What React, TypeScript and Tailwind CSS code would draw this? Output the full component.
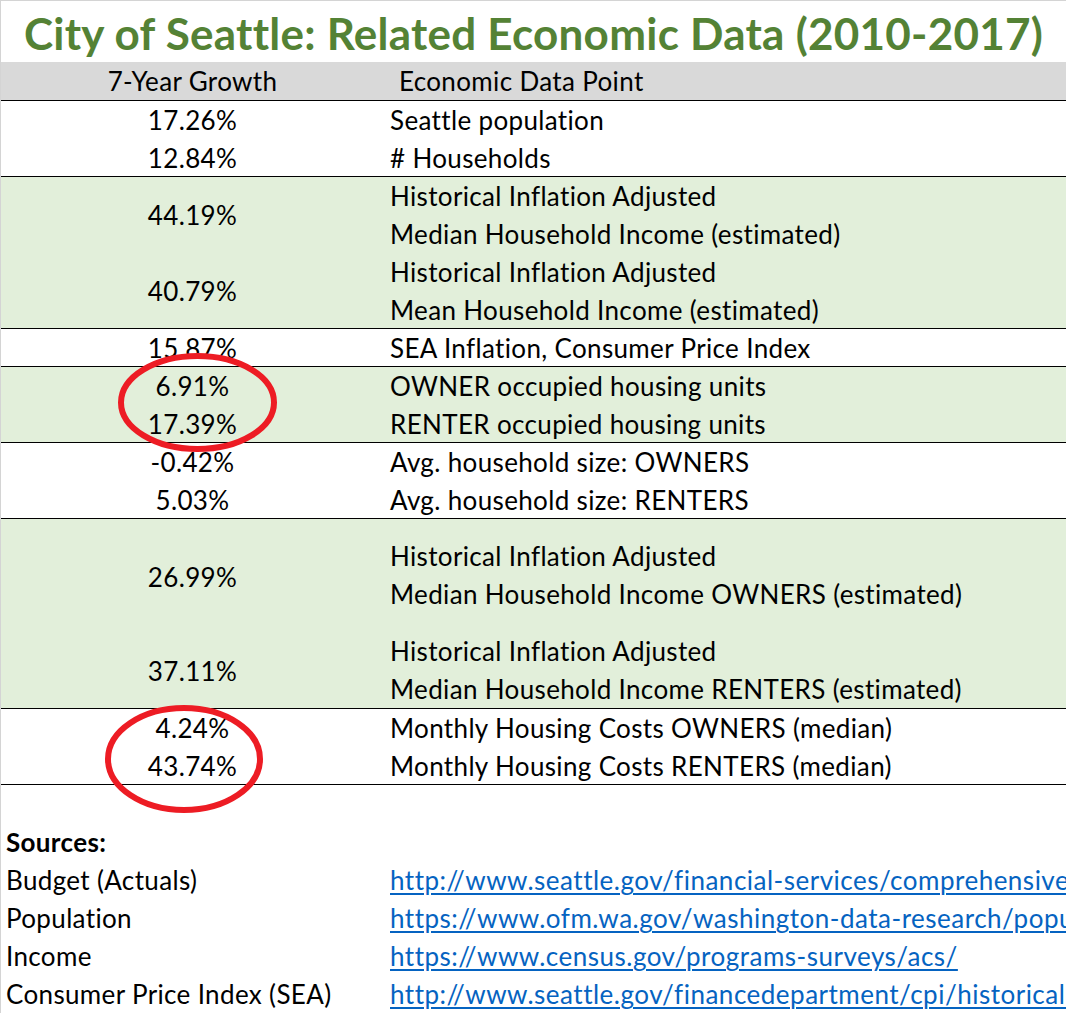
import React from "react";

const GREEN = "bg-[#e2efda]";

function Row({ children, className = "" }: { children?: React.ReactNode; className?: string }) {
  return <div className={"h-[38px] leading-[38px] whitespace-nowrap " + className}>{children}</div>;
}

function Spacer({ h }: { h: string }) {
  return <div className={h} />;
}

function Group({
  bg,
  h,
  left,
  right,
}: {
  bg: string;
  h: string;
  left: React.ReactNode;
  right: React.ReactNode;
}) {
  return (
    <div className={`flex border-b border-black ${bg} ${h}`}>
      <div className="flex w-[383px] shrink-0 flex-col text-center">{left}</div>
      <div className="flex flex-1 flex-col pl-[6px]">{right}</div>
    </div>
  );
}

function Ellipses() {
  return (
    <svg
      className="pointer-events-none absolute left-0 top-0"
      width="1074"
      height="1013"
      viewBox="0 0 1074 1013"
    >
      <ellipse cx="197.5" cy="402.5" rx="76.5" ry="46.5" fill="none" stroke="#ed1c24" strokeWidth="6" />
      <ellipse cx="184" cy="759" rx="76" ry="51" fill="none" stroke="#ed1c24" strokeWidth="6" />
    </svg>
  );
}

export default function App() {
  return (
    <div className="relative h-[1013px] w-[1074px] overflow-hidden bg-white font-['Lato',sans-serif] text-[26px] tracking-[0.35px] text-black">
      <div className="w-[1066px] overflow-hidden border-l border-t border-[#d4d4d4]">
        {/* Title */}
        <div className="h-[61px] pt-[10px] text-center text-[44px] font-bold leading-none tracking-[0.25px] text-[#548235] whitespace-nowrap">
          City of Seattle: Related Economic Data (2010-2017)
        </div>

        {/* Header */}
        <div className="flex h-[39px] border-b border-black bg-[#d9d9d9]">
          <div className="w-[383px] shrink-0 text-center leading-[38px]">7-Year Growth</div>
          <div className="flex-1 pl-[15px] leading-[38px]">Economic Data Point</div>
        </div>

        <Group
          bg="bg-white"
          h="h-[76px]"
          left={
            <>
              <Row>17.26%</Row>
              <Row>12.84%</Row>
            </>
          }
          right={
            <>
              <Row>Seattle population</Row>
              <Row># Households</Row>
            </>
          }
        />

        <Group
          bg={GREEN}
          h="h-[152px]"
          left={
            <>
              <Spacer h="h-[19px]" />
              <Row>44.19%</Row>
              <Spacer h="h-[38px]" />
              <Row>40.79%</Row>
            </>
          }
          right={
            <>
              <Row>Historical Inflation Adjusted</Row>
              <Row>Median Household Income (estimated)</Row>
              <Row>Historical Inflation Adjusted</Row>
              <Row>Mean Household Income (estimated)</Row>
            </>
          }
        />

        <Group
          bg="bg-white"
          h="h-[38px]"
          left={<Row>15.87%</Row>}
          right={<Row>SEA Inflation, Consumer Price Index</Row>}
        />

        <Group
          bg={GREEN}
          h="h-[76px]"
          left={
            <>
              <Row>6.91%</Row>
              <Row>17.39%</Row>
            </>
          }
          right={
            <>
              <Row>OWNER occupied housing units</Row>
              <Row>RENTER occupied housing units</Row>
            </>
          }
        />

        <Group
          bg="bg-white"
          h="h-[76px]"
          left={
            <>
              <Row>-0.42%</Row>
              <Row>5.03%</Row>
            </>
          }
          right={
            <>
              <Row>Avg. household size: OWNERS</Row>
              <Row>Avg. household size: RENTERS</Row>
            </>
          }
        />

        <Group
          bg={GREEN}
          h="h-[190px]"
          left={
            <>
              <Spacer h="h-[39px]" />
              <Row>26.99%</Row>
              <Spacer h="h-[56px]" />
              <Row>37.11%</Row>
            </>
          }
          right={
            <>
              <Spacer h="h-[18px]" />
              <Row>Historical Inflation Adjusted</Row>
              <Row>Median Household Income OWNERS (estimated)</Row>
              <Spacer h="h-[19px]" />
              <Row>Historical Inflation Adjusted</Row>
              <Row>Median Household Income RENTERS (estimated)</Row>
            </>
          }
        />

        <Group
          bg="bg-white"
          h="h-[76px]"
          left={
            <>
              <Row>4.24%</Row>
              <Row>43.74%</Row>
            </>
          }
          right={
            <>
              <Row>Monthly Housing Costs OWNERS (median)</Row>
              <Row>Monthly Housing Costs RENTERS (median)</Row>
            </>
          }
        />

        {/* Sources */}
        <div className="h-[38px]" />
        <div className="flex flex-col">
          <Row className="pl-[5px] font-bold">Sources:</Row>
          {[
            ["Budget (Actuals)", "http://www.seattle.gov/financial-services/comprehensive-annual-financial-report"],
            ["Population", "https://www.ofm.wa.gov/washington-data-research/population-demographics"],
            ["Income", "https://www.census.gov/programs-surveys/acs/"],
            ["Consumer Price Index (SEA)", "http://www.seattle.gov/financedepartment/cpi/historical.htm"],
          ].map(([label, url]) => (
            <div key={label} className="flex h-[38px] leading-[38px] whitespace-nowrap">
              <div className="w-[383px] shrink-0 pl-[5px]">{label}</div>
              <div className="pl-[6px] tracking-[0.5px] text-[#0563c1] underline decoration-[2px] underline-offset-[3px]">{url}</div>
            </div>
          ))}
        </div>
      </div>
      <Ellipses />
    </div>
  );
}
